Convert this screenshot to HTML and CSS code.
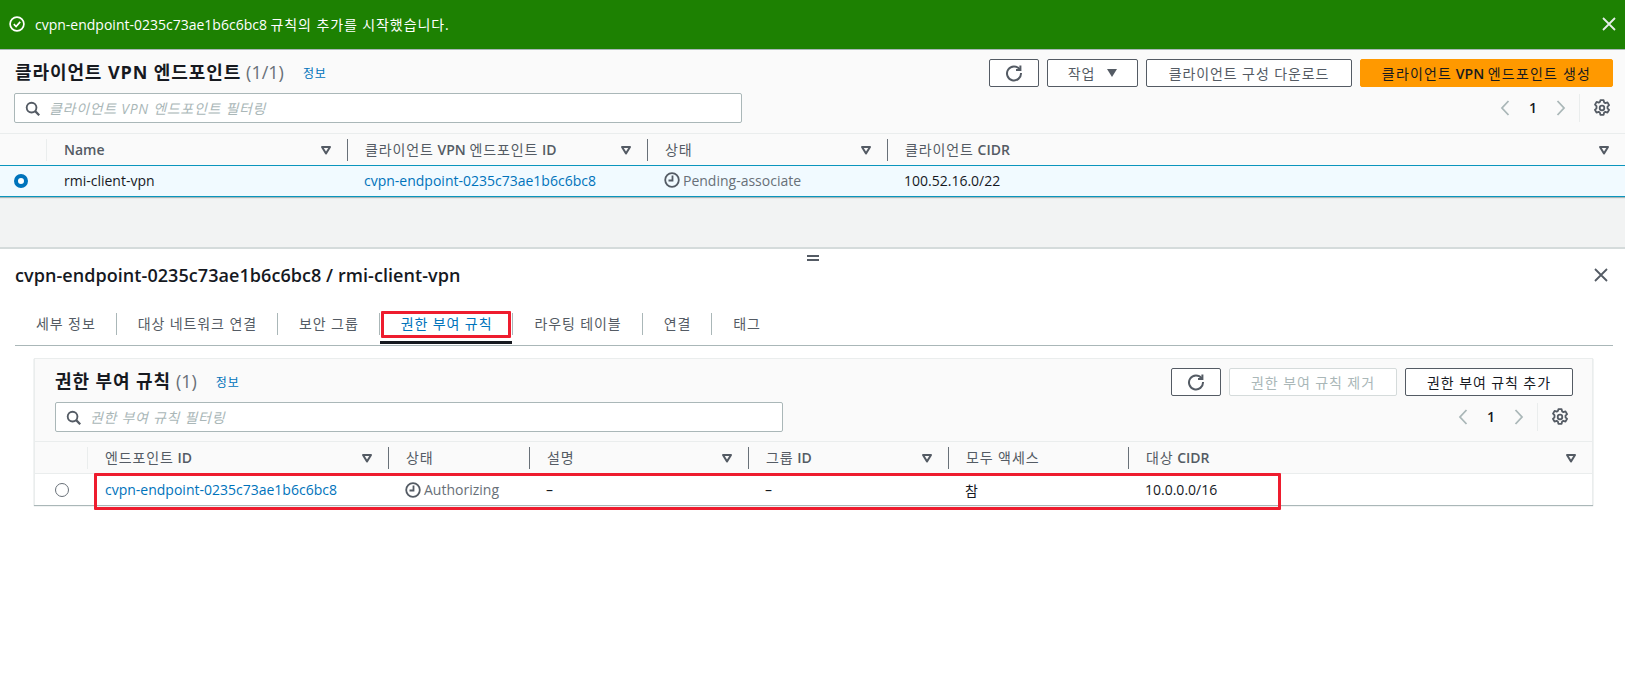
FILE: index.html
```html
<!DOCTYPE html>
<html lang="ko">
<head>
    <meta charset="UTF-8">
    <title>클라이언트 VPN 엔드포인트</title>
    <link rel="stylesheet" href="styles.css">
</head>
<body>

    <svg width="0" height="0" class="defs">
        <symbol id="i-sort" viewBox="0 0 12 12"><path d="M2 3h8L6 9.5z" fill="none" stroke="currentColor" stroke-width="2" stroke-linejoin="round"/></symbol>
        <symbol id="i-refresh" viewBox="0 0 18 18"><path d="M14.6 5.2A7 7 0 1 0 16 9" fill="none" stroke="currentColor" stroke-width="2"/><path d="M15.4 1.5v4.4H11" fill="none" stroke="currentColor" stroke-width="2"/></symbol>
        <symbol id="i-search" viewBox="0 0 16 16"><circle cx="7" cy="7" r="5.2" fill="none" stroke="currentColor" stroke-width="2"/><path d="M10.8 10.8l4.4 4.4" stroke="currentColor" stroke-width="2.4"/></symbol>
        <symbol id="i-gear" viewBox="0 0 18 18"><path d="M7.4 1.2h3.2l.5 2.2 1.300.7 2.100-.7 1.600 2.800-1.600 1.500v1.600l1.600 1.500-1.600 2.800-2.100-.7-1.300.7-.5 2.200H7.400l-.5-2.200-1.300-.7-2.100.7-1.600-2.800 1.600-1.500V7.200L2 5.700l1.600-2.800 2.100.7 1.300-.7z" fill="none" stroke="currentColor" stroke-width="1.800" stroke-linejoin="round"/><circle cx="9" cy="9" r="2.300" fill="none" stroke="currentColor" stroke-width="1.800"/></symbol>
        <symbol id="i-clock" viewBox="0 0 16 16"><circle cx="8" cy="8" r="6.800" fill="none" stroke="currentColor" stroke-width="1.800"/><path d="M8.500 3.500v5H4.500" fill="none" stroke="currentColor" stroke-width="1.800"/></symbol>
        <symbol id="i-close" viewBox="0 0 14 14"><path d="M1 1l12 12M13 1L1 13" fill="none" stroke="currentColor" stroke-width="1.800"/></symbol>
        <symbol id="i-prev" viewBox="0 0 10 16"><path d="M8.500 1L2 8l6.500 7" fill="none" stroke="currentColor" stroke-width="1.800"/></symbol>
        <symbol id="i-next" viewBox="0 0 10 16"><path d="M1.500 1L8 8l-6.500 7" fill="none" stroke="currentColor" stroke-width="1.800"/></symbol>
    </svg>

    <div class="flash">
        <svg class="flash-check" viewBox="0 0 16 16" width="16" height="16"><circle cx="8" cy="8" r="6.900" fill="none" stroke="#fff" stroke-width="1.700"/><path d="M4.800 8.200l2.300 2.300 4.100-4.600" fill="none" stroke="#fff" stroke-width="1.700"/></svg>
        <span class="flash-text">cvpn-endpoint-0235c73ae1b6c6bc8 <span class="ko">규칙의 추가를 시작했습니다.</span></span>
        <svg class="flash-close"><use href="#i-close"/></svg>
    </div>

    <section class="top">
        <div class="head">
            <div class="head-row">
                <h1 class="title title-top"><span class="ko">클라이언트 VPN 엔드포인트</span><span class="count">(1/1)</span><a class="info ko">정보</a></h1>
                <div class="actions">
                    <button class="btn btn-icon"><svg class="ico-refresh"><use href="#i-refresh"/></svg></button>
                    <button class="btn btn-menu"><span class="ko">작업</span><span class="caret"></span></button>
                    <button class="btn btn-download ko">클라이언트 구성 다운로드</button>
                    <button class="btn btn-primary"><span class="ko">클라이언트</span>&nbsp;VPN&nbsp;<span class="ko">엔드포인트 생성</span></button>
                </div>
            </div>
            <div class="filter-row">
                <div class="search">
                    <svg class="ico-search"><use href="#i-search"/></svg>
                    <span class="placeholder">클라이언트 VPN 엔드포인트 필터링</span>
                </div>
                <div class="pager pager-top">
                    <svg class="ico-page"><use href="#i-prev"/></svg>
                    <span class="page-num">1</span>
                    <svg class="ico-page"><use href="#i-next"/></svg>
                    <span class="pager-sep"></span>
                    <svg class="ico-gear"><use href="#i-gear"/></svg>
                </div>
            </div>
        </div>

        <div class="grid grid-top grid-head">
            <div class="cell cell-radio"></div>
            <div class="cell">Name<svg class="sort"><use href="#i-sort"/></svg></div>
            <div class="cell"><span><span class="ko">클라이언트</span> VPN <span class="ko">엔드포인트</span> ID</span><svg class="sort"><use href="#i-sort"/></svg></div>
            <div class="cell"><span class="ko">상태</span><svg class="sort"><use href="#i-sort"/></svg></div>
            <div class="cell"><span><span class="ko">클라이언트</span> CIDR</span><svg class="sort"><use href="#i-sort"/></svg></div>
        </div>
        <div class="grid grid-top grid-row row-selected">
            <div class="cell-check check-top"><span class="radio radio-on"></span></div>
            <div class="cell">rmi-client-vpn</div>
            <div class="cell"><a class="link">cvpn-endpoint-0235c73ae1b6c6bc8</a></div>
            <div class="cell status"><svg class="ico-clock"><use href="#i-clock"/></svg>Pending-associate</div>
            <div class="cell">100.52.16.0/22</div>
        </div>
    </section>

    <div class="gap"></div>

    <section class="detail">
        <div class="handle"></div>
        <div class="detail-head">
            <h2 class="detail-title">cvpn-endpoint-0235c73ae1b6c6bc8 / rmi-client-vpn</h2>
            <svg class="detail-close"><use href="#i-close"/></svg>
        </div>

        <div class="tabs ko">
            <a class="tab">세부 정보</a>
            <a class="tab">대상 네트워크 연결</a>
            <a class="tab">보안 그룹</a>
            <a class="tab tab-active">권한 부여 규칙<span class="mark mark-tab"></span></a>
            <a class="tab">라우팅 테이블</a>
            <a class="tab">연결</a>
            <a class="tab">태그</a>
        </div>

        <div class="card">
            <div class="card-head">
                <div class="head-row">
                    <h3 class="title"><span class="ko">권한 부여 규칙</span><span class="count">(1)</span><a class="info ko">정보</a></h3>
                    <div class="actions">
                        <button class="btn btn-icon"><svg class="ico-refresh"><use href="#i-refresh"/></svg></button>
                        <button class="btn btn-rule btn-disabled ko">권한 부여 규칙 제거</button>
                        <button class="btn btn-rule ko">권한 부여 규칙 추가</button>
                    </div>
                </div>
                <div class="filter-row">
                    <div class="search">
                        <svg class="ico-search"><use href="#i-search"/></svg>
                        <span class="placeholder">권한 부여 규칙 필터링</span>
                    </div>
                    <div class="pager">
                        <svg class="ico-page"><use href="#i-prev"/></svg>
                        <span class="page-num">1</span>
                        <svg class="ico-page"><use href="#i-next"/></svg>
                        <span class="pager-sep"></span>
                        <svg class="ico-gear"><use href="#i-gear"/></svg>
                    </div>
                </div>
            </div>

            <div class="grid grid-card grid-head">
                <div class="cell cell-radio"></div>
                <div class="cell"><span><span class="ko">엔드포인트</span> ID</span><svg class="sort"><use href="#i-sort"/></svg></div>
                <div class="cell"><span class="ko">상태</span></div>
                <div class="cell"><span class="ko">설명</span><svg class="sort"><use href="#i-sort"/></svg></div>
                <div class="cell"><span><span class="ko">그룹</span> ID</span><svg class="sort"><use href="#i-sort"/></svg></div>
                <div class="cell"><span class="ko">모두 액세스</span></div>
                <div class="cell"><span><span class="ko">대상</span> CIDR</span><svg class="sort"><use href="#i-sort"/></svg></div>
            </div>
            <div class="grid grid-card grid-row row-last">
                <div class="cell-check"><span class="radio"></span></div>
                <div class="cell"><a class="link">cvpn-endpoint-0235c73ae1b6c6bc8</a></div>
                <div class="cell status"><svg class="ico-clock"><use href="#i-clock"/></svg>Authorizing</div>
                <div class="cell">–</div>
                <div class="cell">–</div>
                <div class="cell ko">참</div>
                <div class="cell">10.0.0.0/16</div>
                <span class="mark mark-row"></span>
            </div>
        </div>
    </section>

</body>
</html>
```

FILE: styles.css
```css
* {
    box-sizing: border-box;
}

html, body {
    height: 100%;
}

body {
    margin: 0;
    font-family: "Open Sans", "Noto Sans CJK KR", sans-serif;
    font-size: 14px;
    color: #16191f;
    background-color: #fff;
    overflow: hidden;
}

h1, h2, h3 {
    margin: 0;
}

svg {
    display: block;
    flex: none;
}

.defs {
    position: absolute;
}

.ko {
    letter-spacing: 0.9px;
}

/* flash */
.flash {
    height: 50px;
    padding: 0 9px 0 9px;
    display: flex;
    align-items: center;
    gap: 10px;
    background-color: #1d8102;
    border-bottom: 1px solid #aab7b8;
    color: #fff;
}

.flash-check {
    width: 16px;
    height: 16px;
    margin-bottom: 1px;
}

.flash-text {
    flex: 1;
    margin-bottom: 2px;
}

.flash-close {
    width: 14px;
    height: 14px;
    color: #e6eeea;
    margin-bottom: 1px;
}

/* top table */
.top {
    background-color: #fafafa;
}

.head {
    height: 83px;
    padding: 9px 12px 0 14px;
}

.head-row {
    display: flex;
    justify-content: space-between;
    height: 28px;
}

.title {
    font-size: 18px;
    font-weight: 700;
    line-height: 26px;
    height: 26px;
    display: flex;
    align-items: center;
    white-space: pre;
}

.title-top {
    margin-left: 1px;
}

.count {
    margin-left: 5px;
    font-weight: 400;
    color: #687078;
}

.info {
    margin: 3px 0 0 19px;
    font-size: 12px;
    font-weight: 400;
    color: #0073bb;
}

.actions {
    display: flex;
    gap: 8px;
}

.btn {
    height: 28px;
    padding: 0;
    font-family: inherit;
    font-size: 14px;
    color: #545b64;
    background-color: #fff;
    border: 1px solid #545b64;
    border-radius: 2px;
    display: flex;
    align-items: center;
    justify-content: center;
}

.btn-icon {
    width: 50px;
}

.btn-menu {
    width: 91px;
    gap: 12px;
}

.caret {
    width: 0;
    height: 0;
    border-left: 5px solid transparent;
    border-right: 5px solid transparent;
    border-top: 8px solid #545b64;
}

.btn-download {
    width: 206px;
}

.btn-primary {
    width: 253px;
    font-weight: 600;
    color: #16191f;
    background-color: #ff9900;
    border-color: #ff9900;
}

.btn-primary .ko {
    font-weight: 400;
    letter-spacing: 1.2px;
}

.btn-rule {
    width: 168px;
    color: #16191f;
}

.btn-disabled {
    color: #aab7b8;
    border-color: #d5dbdb;
}

.ico-refresh {
    width: 18px;
    height: 18px;
    color: #545b64;
}

.filter-row {
    display: flex;
    justify-content: space-between;
    margin-top: 6px;
}

.search {
    width: 728px;
    height: 30px;
    padding-left: 10px;
    display: flex;
    align-items: center;
    gap: 9px;
    background-color: #fff;
    border: 1px solid #aab7b8;
    border-radius: 2px;
}

.ico-search {
    width: 15px;
    height: 15px;
    color: #545b64;
}

.placeholder {
    font-style: italic;
    letter-spacing: 0.7px;
    color: #aab7b8;
}

.pager {
    display: flex;
    align-items: center;
    height: 29px;
    padding-right: 4px;
}

.pager-top {
    padding-right: 2px;
}

.ico-page {
    width: 10px;
    height: 16px;
    color: #aab7b8;
}

.page-num {
    width: 46px;
    text-align: center;
    font-weight: 600;
}

.pager-sep {
    width: 1px;
    height: 28px;
    margin: 0 13px 0 13px;
    background-color: #eaeded;
}

.ico-gear {
    width: 18px;
    height: 18px;
    color: #545b64;
}

/* grid tables */
.grid {
    display: grid;
    align-items: center;
    position: relative;
}

.grid-top {
    grid-template-columns: 47px 300px 300px 240px 1fr;
}

.grid-card {
    grid-template-columns: 53px 300px 141px 219px 200px 180px 1fr;
}

.grid-head {
    height: 32px;
    background-color: #fafafa;
    border-top: 1px solid #eaeded;
    color: #545b64;
    font-weight: 600;
}

.grid-head .ko {
    font-weight: 400;
}

.grid-head .cell {
    position: relative;
    height: 22px;
    padding-left: 17px;
    padding-right: 15px;
    border-left: 1px solid #687078;
    line-height: 22px;
    display: flex;
    justify-content: space-between;
    align-items: center;
}

.grid-head .cell-radio {
    border-left: 0;
    border-right: 1px solid #eaeded;
}

.grid-head .cell:nth-child(2) {
    border-left: 0;
}

.sort {
    width: 12px;
    height: 12px;
    color: #545b64;
}

.grid-row {
    height: 32px;
    background-color: #fff;
}

.grid-row .cell {
    padding-left: 17px;
    padding-bottom: 2px;
    white-space: nowrap;
}

.row-selected {
    background-color: #f1faff;
    border-top: 1px solid #0a95bd;
    border-bottom: 1px solid #0a95bd;
    box-shadow: 0 1px 1px #aab7b8;
}

.row-last {
    border-top: 1px solid #eaeded;
}

.row-last .cell {
    padding-bottom: 0;
}

.cell-check {
    display: flex;
    justify-content: center;
}

.check-top {
    justify-content: flex-start;
    padding-left: 14px;
}

.radio {
    width: 14px;
    height: 14px;
    border: 1px solid #687078;
    border-radius: 50%;
    background-color: #fff;
}

.radio-on {
    border: 4px solid #0073bb;
}

.link {
    color: #0073bb;
}

.status {
    display: flex;
    align-items: center;
    gap: 3px;
    color: #687078;
}

.ico-clock {
    width: 16px;
    height: 16px;
    color: #545b64;
}

/* lower part */
.gap {
    height: 52px;
    background-color: #f2f3f3;
    border-bottom: 2px solid #d5dbdb;
}

.detail {
    position: relative;
    padding: 0 12px 0 15px;
}

.handle {
    position: absolute;
    left: 807px;
    top: 6px;
    width: 12px;
    height: 6px;
    border-top: 2px solid #545b64;
    border-bottom: 2px solid #545b64;
}

.detail-head {
    height: 53px;
    padding-bottom: 2px;
    display: flex;
    align-items: center;
    justify-content: space-between;
}

.detail-title {
    font-size: 18px;
    font-weight: 600;
    letter-spacing: 0.06px;
}

.detail-close {
    width: 14px;
    height: 14px;
    color: #545b64;
    margin-right: 5px;
}

.tabs {
    height: 44px;
    padding-top: 11px;
    display: flex;
    border-bottom: 1px solid #aab7b8;
}

.tab {
    position: relative;
    height: 22px;
    padding: 0 20px 0 21px;
    line-height: 22px;
    color: #545b64;
    border-left: 1px solid #aab7b8;
}

.tab:first-child {
    border-left: 0;
}

.tab-active {
    color: #0073bb;
}

.tab-active::after {
    content: "";
    position: absolute;
    left: 0;
    right: 0;
    top: 28px;
    height: 3px;
    background-color: #16191f;
}

.mark {
    position: absolute;
    border: 3px solid #ee1c2e;
    border-radius: 1px;
}

.mark-tab {
    left: 1px;
    top: -2px;
    right: 1px;
    height: 27px;
}

.card {
    margin: 12px 20px 0 19px;
    background-color: #fff;
    border: 1px solid #eaeded;
    border-bottom: 0;
    box-shadow: 0 1px 1px #aab7b8;
}

.card-head {
    height: 82px;
    padding: 9px 19px 0 20px;
    background-color: #fafafa;
}

.mark-row {
    left: 59px;
    top: -1px;
    width: 1187px;
    height: 37px;
}
```
